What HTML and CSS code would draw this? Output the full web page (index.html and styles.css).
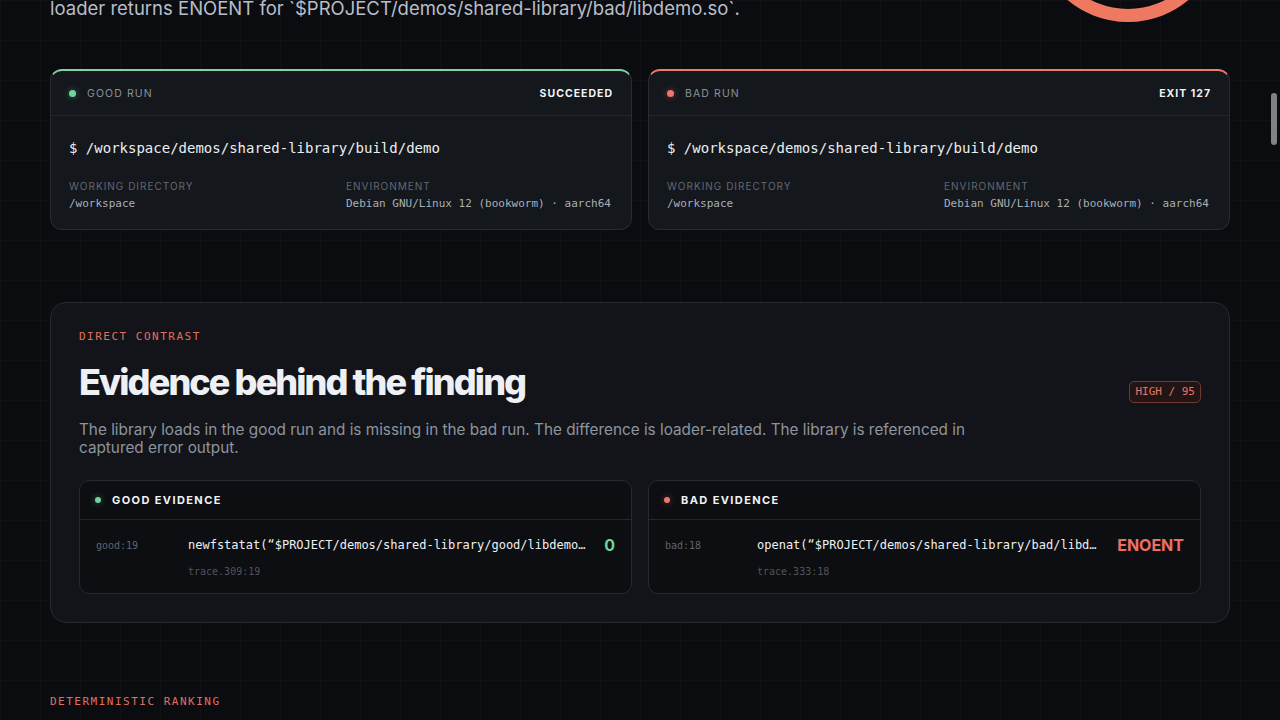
FILE: index.html
```html
<!DOCTYPE html>
<html lang="en">
<head>
    <meta charset="UTF-8">
    <meta name="viewport" content="width=device-width, initial-scale=1.0">
    <title>Shared library diff</title>
    <link rel="stylesheet" href="styles.css">
</head>
<body>
    <div class="page">
        <!-- 顶部摘要，页面已向下滚动，只露出最后一行 -->
        <section class="hero">
            <p class="lede">The bad run stops before main() because the dynamic<br>loader returns ENOENT for `$PROJECT/demos/shared-library/bad/libdemo.so`.</p>
            <div class="score-ring">
                <svg width="200" height="200" viewBox="0 0 200 200">
                    <circle cx="100" cy="100" r="87.5" fill="none" stroke="#ef7860" stroke-width="13"/>
                </svg>
            </div>
        </section>

        <section class="runs">
            <div class="run-card good">
                <div class="run-head">
                    <span class="run-name"><i class="dot"></i>GOOD RUN</span>
                    <span class="run-status">SUCCEEDED</span>
                </div>
                <div class="run-body">
                    <div class="cmd">$ /workspace/demos/shared-library/build/demo</div>
                    <div class="meta">
                        <div>
                            <div class="meta-label">WORKING DIRECTORY</div>
                            <div class="meta-value">/workspace</div>
                        </div>
                        <div>
                            <div class="meta-label">ENVIRONMENT</div>
                            <div class="meta-value">Debian GNU/Linux 12 (bookworm) · aarch64</div>
                        </div>
                    </div>
                </div>
            </div>
            <div class="run-card bad">
                <div class="run-head">
                    <span class="run-name"><i class="dot"></i>BAD RUN</span>
                    <span class="run-status">EXIT 127</span>
                </div>
                <div class="run-body">
                    <div class="cmd">$ /workspace/demos/shared-library/build/demo</div>
                    <div class="meta">
                        <div>
                            <div class="meta-label">WORKING DIRECTORY</div>
                            <div class="meta-value">/workspace</div>
                        </div>
                        <div>
                            <div class="meta-label">ENVIRONMENT</div>
                            <div class="meta-value">Debian GNU/Linux 12 (bookworm) · aarch64</div>
                        </div>
                    </div>
                </div>
            </div>
        </section>

        <section class="panel">
            <div class="panel-head">
                <div>
                    <div class="eyebrow">DIRECT CONTRAST</div>
                    <h2 class="panel-title">Evidence behind the finding</h2>
                </div>
                <span class="badge">HIGH / 95</span>
            </div>
            <p class="panel-desc">The library loads in the good run and is missing in the bad run. The difference is loader-related. The library is referenced in captured error output.</p>

            <div class="evidence">
                <div class="ev-box good">
                    <div class="ev-head"><i class="dot"></i>GOOD EVIDENCE</div>
                    <div class="ev-row">
                        <span class="ev-line">good:19</span>
                        <span class="ev-call">newfstatat(“$PROJECT/demos/shared-library/good/libdemo.so”, {st_mode=S_IFREG|0755, st_size=70160, ...}, 0)</span>
                        <span class="ev-result">0</span>
                        <span class="ev-trace">trace.309:19</span>
                    </div>
                </div>
                <div class="ev-box bad">
                    <div class="ev-head"><i class="dot"></i>BAD EVIDENCE</div>
                    <div class="ev-row">
                        <span class="ev-line">bad:18</span>
                        <span class="ev-call">openat(“$PROJECT/demos/shared-library/bad/libdemo.so”, O_RDONLY|O_CLOEXEC)</span>
                        <span class="ev-result">ENOENT</span>
                        <span class="ev-trace">trace.333:18</span>
                    </div>
                </div>
            </div>
        </section>

        <section class="ranking">
            <div class="eyebrow">DETERMINISTIC RANKING</div>
        </section>
    </div>
    <div class="scroll-thumb"></div>
</body>
</html>
```
FILE: styles.css
```css
*{
    margin: 0;
    padding: 0;
    box-sizing: border-box;
}
html {
    overflow: hidden;
}
body {
    background-color: #0b0c10;
    background-image:
        linear-gradient(rgba(255,255,255,.018) 1px, transparent 1px),
        linear-gradient(90deg, rgba(255,255,255,.018) 1px, transparent 1px);
    background-size: 40px 40px;
    color: #e9ebef;
    font-family: Inter, "Noto Sans", sans-serif;
}
.page {
    padding: 0 50px;
}

/* 顶部 */
.hero {
    display: flex;
    justify-content: space-between;
    align-items: flex-end;
    margin-top: -172px;
    margin-bottom: 41px;
}
.lede {
    font-size: 18.5px;
    line-height: 28px;
    color: #b9bec7;
    margin-bottom: 6px;
}
.score-ring {
    margin-right: 2px;
}
.score-ring svg {
    display: block;
}

/* 两次运行 */
.runs {
    display: grid;
    grid-template-columns: 1fr 1fr;
    gap: 16px;
}
.run-card {
    background: #14171c;
    border: 1px solid #272b33;
    border-top: 2px solid #7fd4a0;
    border-radius: 12px;
}
.run-card.bad {
    border-top-color: #ef7a72;
}
.run-head {
    display: flex;
    justify-content: space-between;
    align-items: center;
    height: 45px;
    padding: 0 18px;
    border-bottom: 1px solid #23272e;
}
.run-name {
    display: flex;
    align-items: center;
    font-size: 10.5px;
    letter-spacing: 1.1px;
    color: #8a9099;
}
.dot {
    display: inline-block;
    width: 7px;
    height: 7px;
    border-radius: 50%;
    background: #6fd49a;
    box-shadow: 0 0 6px rgba(111,212,154,.45);
    margin-right: 11px;
}
.bad .dot {
    background: #f07470;
    box-shadow: 0 0 6px rgba(240,116,112,.45);
}
.run-status {
    font-size: 10.5px;
    font-weight: 700;
    letter-spacing: 1px;
    color: #f3f4f6;
}
.run-body {
    padding: 22px 18px 17px;
}
.cmd {
    font-family: "DejaVu Sans Mono", monospace;
    font-size: 14px;
    line-height: 20px;
    color: #eceef2;
}
.meta {
    display: grid;
    grid-template-columns: 1fr 1fr;
    gap: 10px;
    margin-top: 21px;
}
.meta-label {
    font-size: 10px;
    line-height: 14px;
    letter-spacing: 1px;
    color: #626873;
}
.meta-value {
    margin-top: 3px;
    font-family: "DejaVu Sans Mono", monospace;
    font-size: 11px;
    line-height: 16px;
    color: #a9afb8;
}

/* 证据面板 */
.panel {
    margin-top: 72px;
    background: #121419;
    border: 1px solid #262a31;
    border-radius: 16px;
    padding: 26px 28px 28px;
}
.panel-head {
    display: flex;
    justify-content: space-between;
    align-items: flex-end;
}
.eyebrow {
    font-family: "DejaVu Sans Mono", monospace;
    font-size: 11px;
    line-height: 16px;
    letter-spacing: 1.5px;
    color: #e0705f;
}
.panel-title {
    margin-top: 16px;
    font-size: 36px;
    line-height: 42px;
    font-weight: 800;
    letter-spacing: -1.9px;
    color: #eef0f4;
}
.badge {
    font-family: "DejaVu Sans Mono", monospace;
    font-size: 11px;
    line-height: 20px;
    padding: 0 5px;
    color: #e5756a;
    background: #221514;
    border: 1px solid #6e3833;
    border-radius: 5px;
}
.panel-desc {
    margin-top: 18px;
    max-width: 920px;
    font-size: 15.3px;
    line-height: 18px;
    color: #8d949e;
}
.evidence {
    display: grid;
    grid-template-columns: 1fr 1fr;
    gap: 16px;
    margin-top: 23px;
}
.ev-box {
    background: #0c0e11;
    border: 1px solid #252930;
    border-radius: 10px;
    min-width: 0;
}
.ev-head {
    display: flex;
    align-items: center;
    height: 39px;
    padding: 0 15px;
    border-bottom: 1px solid #22262d;
    font-size: 11px;
    font-weight: 700;
    letter-spacing: 1.4px;
    color: #f1f2f5;
}
.ev-head .dot {
    width: 6px;
    height: 6px;
    margin-right: 11px;
}
.ev-row {
    display: grid;
    grid-template-columns: 78px minmax(0, 1fr) auto;
    column-gap: 14px;
    align-items: center;
    padding: 15px 16px 14px;
}
.ev-line {
    font-family: "DejaVu Sans Mono", monospace;
    font-size: 10px;
    color: #5e646e;
}
.ev-call {
    font-family: "DejaVu Sans Mono", monospace;
    font-size: 12px;
    line-height: 18px;
    color: #eef0f3;
    white-space: nowrap;
    overflow: hidden;
    text-overflow: ellipsis;
}
.ev-result {
    font-size: 16px;
    font-weight: 700;
    color: #6fd49a;
}
.bad .ev-result {
    color: #ec6f66;
}
.ev-trace {
    grid-column: 2;
    margin-top: 10px;
    font-family: "DejaVu Sans Mono", monospace;
    font-size: 10px;
    line-height: 14px;
    color: #4f545d;
}

.ranking {
    margin-top: 71px;
}

/* 模拟的滚动条 */
.scroll-thumb {
    position: fixed;
    right: 3px;
    top: 93px;
    width: 6px;
    height: 52px;
    border-radius: 3px;
    background: rgba(170,170,170,.75);
}
```
